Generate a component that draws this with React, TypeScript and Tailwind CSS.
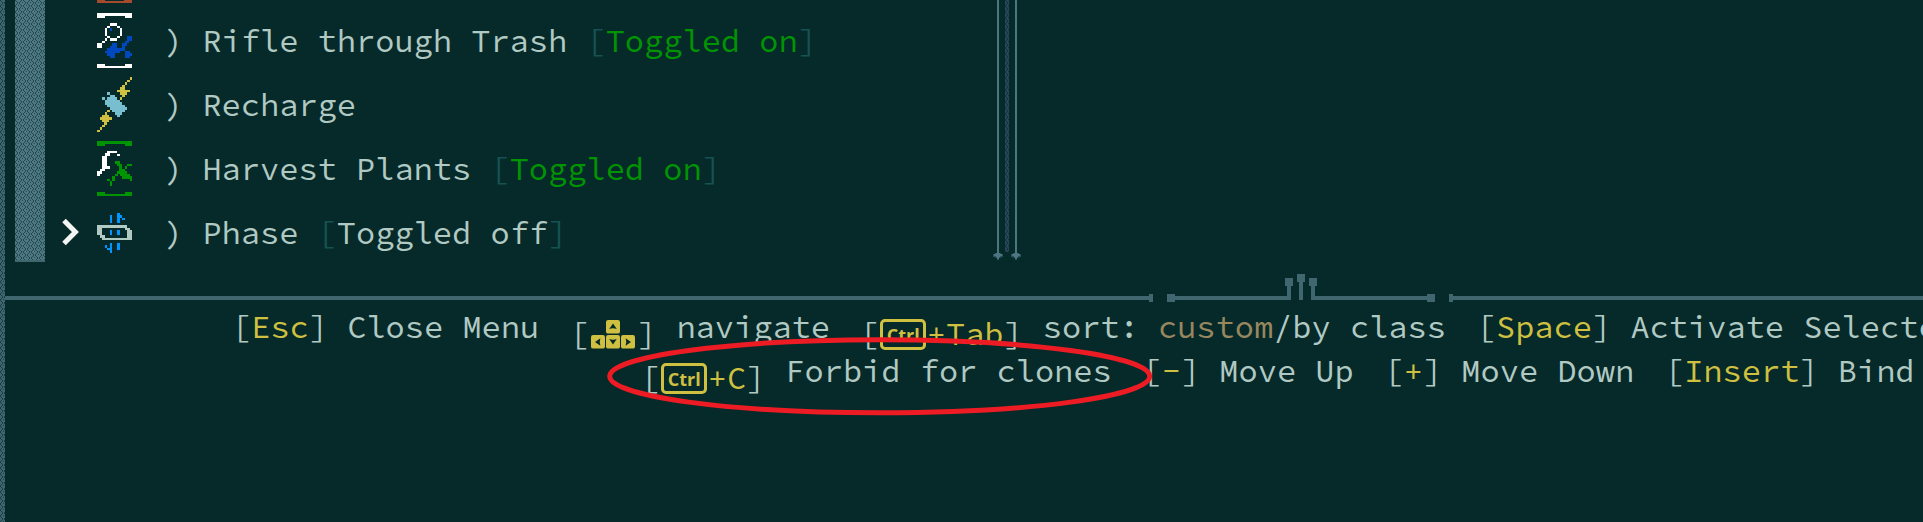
import type { ReactNode } from "react";

type Rect = [number, number, number, number];
type Layer = { fill: string; rects: Rect[] };

// Rects are given as left, top, right, bottom in sprite units.
function Sprite({ viewBox, layers, className }: { viewBox: string; layers: Layer[]; className: string }) {
  return (
    <svg viewBox={viewBox} preserveAspectRatio="none" shapeRendering="crispEdges" className={className}>
      {layers.map((layer, i) => (
        <g key={i} fill={layer.fill}>
          {layer.rects.map(([l, t, r, b], j) => (
            <rect key={j} x={l} y={t} width={r - l} height={b - t} />
          ))}
        </g>
      ))}
    </svg>
  );
}

const WHITE = "#ffffff";
const GREEN = "#009403";
const BLUE = "#0048bd";
const AZURE = "#0096ff";
const YELLOW = "#cfc041";
const CYAN = "#77bfcf";
const GREY = "#b1c9c3";

const rifle: Layer[] = [
  {
    fill: WHITE,
    rects: [
      [291, 36, 396, 45], [291, 45, 315, 51], [375, 45, 396, 51],
      [291, 195, 396, 201], [291, 189, 315, 195], [375, 189, 396, 195],
      [330, 66, 351, 75], [321, 75, 330, 81], [351, 75, 360, 81], [315, 81, 321, 105], [360, 81, 366, 105],
      [321, 105, 330, 111], [351, 105, 360, 111], [330, 111, 351, 120],
      [315, 111, 321, 120], [306, 120, 315, 126], [291, 126, 306, 141],
    ],
  },
  {
    fill: BLUE,
    rects: [
      [330, 81, 336, 90], [381, 105, 396, 120], [375, 120, 387, 126],
      [336, 126, 351, 135], [366, 126, 381, 135], [330, 135, 351, 141], [366, 135, 375, 141],
      [321, 141, 375, 150], [315, 150, 360, 156], [375, 150, 390, 156],
      [321, 156, 345, 165], [375, 156, 396, 165], [330, 165, 345, 171], [375, 165, 390, 171],
    ],
  },
];

const recharge: Layer[] = [
  {
    fill: YELLOW,
    rects: [
      [390, 228, 396, 237], [381, 237, 390, 243], [375, 243, 381, 252], [366, 252, 375, 258],
      [360, 258, 375, 267], [351, 267, 390, 273], [360, 273, 381, 282], [366, 282, 375, 288], [360, 288, 366, 297],
      [321, 327, 330, 333], [315, 333, 321, 342], [306, 342, 327, 348], [300, 348, 336, 357],
      [306, 357, 327, 363], [312, 363, 321, 372], [306, 372, 315, 378], [300, 378, 306, 387], [291, 387, 300, 393],
    ],
  },
  {
    fill: CYAN,
    rects: [
      [321, 273, 330, 282], [306, 288, 315, 297], [330, 282, 345, 288], [321, 288, 351, 297],
      [315, 297, 360, 303], [315, 303, 366, 312], [321, 312, 375, 318], [330, 318, 381, 327],
      [336, 327, 375, 333], [345, 333, 366, 342], [351, 342, 360, 348],
    ],
  },
];

const harvest: Layer[] = [
  {
    fill: GREEN,
    rects: [
      [291, 30, 396, 39], [291, 39, 315, 45], [375, 39, 396, 45],
      [291, 189, 396, 195], [291, 183, 315, 189], [375, 183, 396, 189],
      [345, 90, 360, 99], [351, 99, 366, 105], [381, 99, 396, 105], [357, 105, 366, 114], [375, 105, 381, 114],
      [357, 114, 375, 120], [351, 120, 381, 129], [345, 129, 354, 135], [360, 129, 390, 135],
      [336, 135, 345, 144], [366, 135, 396, 144], [321, 144, 330, 150], [336, 144, 345, 150],
      [390, 144, 396, 150], [330, 150, 336, 165],
    ],
  },
  {
    fill: WHITE,
    rects: [
      [321, 60, 351, 66], [315, 66, 330, 75], [351, 69, 360, 75], [306, 75, 321, 99],
      [306, 99, 321, 105], [315, 105, 330, 114], [306, 105, 315, 120], [300, 114, 306, 129], [291, 120, 300, 135],
    ],
  },
];

const phase: Layer[] = [
  {
    fill: GREY,
    rects: [
      [291, 282, 381, 291], [291, 291, 306, 312], [300, 312, 315, 321], [306, 321, 396, 327],
      [381, 297, 396, 321], [375, 291, 390, 297],
    ],
  },
  {
    fill: AZURE,
    rects: [
      [330, 252, 336, 276], [351, 246, 360, 276], [360, 252, 366, 261], [366, 261, 375, 267],
      [330, 297, 336, 312], [351, 297, 360, 312],
      [330, 336, 336, 366], [315, 342, 321, 351], [321, 351, 330, 357], [351, 336, 360, 357],
    ],
  },
];

function Dither({ id, light, dark, className }: { id: string; light: string; dark: string; className: string }) {
  return (
    <svg className={className} shapeRendering="crispEdges">
      <defs>
        <pattern id={id} width="8" height="6" patternUnits="userSpaceOnUse">
          <rect width="8" height="6" fill={light} />
          <path
            fill={dark}
            d="M0 0h1v1h-1zM1 1h1v1h-1zM2 2h1v1h-1zM4 2h1v1h-1zM5 1h1v1h-1zM6 0h1v1h-1zM4 3h1v1h-1zM5 4h1v1h-1zM6 5h1v1h-1zM0 5h1v1h-1zM1 4h1v1h-1zM2 3h1v1h-1zM7 2h1v1h-1zM3 5h1v1h-1z"
          />
        </pattern>
      </defs>
      <rect width="100%" height="100%" fill={`url(#${id})`} />
    </svg>
  );
}

function Ability({
  icon, top, name, state, on, selected,
}: { icon: Layer[]; top: number; name: string; state?: string; on?: boolean; selected?: boolean }) {
  return (
    <li className="flex h-16 items-center">
      <span className="flex w-[52px] justify-start pl-[17px]">
        {selected && (
          <svg viewBox="0 0 18 28" className="h-7 w-[18px]" fill="none" stroke="#f2f5f4" strokeWidth="5">
            <path d="M2 2.5 L13.4 14 L2 25.5" />
          </svg>
        )}
      </span>
      <Sprite viewBox={`291 ${top} 105 165`} layers={icon} className="h-[55px] w-[35px] shrink-0" />
      <span className="ml-8 pt-[2px] leading-[64px] whitespace-pre">
        {") "}
        {name}
        {state && (
          <>
            <span className="text-[#155352]"> [</span>
            <span className={on ? "text-[#009403]" : ""}>{state}</span>
            <span className="text-[#155352]">]</span>
          </>
        )}
      </span>
    </li>
  );
}

function Rail() {
  return (
    <div className="flex w-[10px] flex-col items-center">
      <div className="h-[252px] w-[2px] bg-[#4b7680]" />
      <svg viewBox="0 0 10 8" className="h-2 w-[10px]" shapeRendering="crispEdges">
        <path fill="#2b525a" d="M0 2h10v3h-10zM2 1h6v5h-6zM4 6h2v2h-2z" />
        <path fill="#4b7680" d="M1 2h8v2h-8zM3 1h4v4h-4zM4 0h2v7h-2z" />
      </svg>
    </div>
  );
}

function Key({ children }: { children: ReactNode }) {
  return (
    <>
      [<span className="text-[#cfc041]">{children}</span>]
    </>
  );
}

function CtrlCap() {
  return (
    <span className="mr-[0.5px] ml-[1px] flex h-[31px] w-[46px] shrink-0 items-center justify-center rounded-[5px] border-3 border-[#cfc041] font-['Open_Sans',sans-serif] text-[18px] leading-none font-bold text-[#cfc041]">
      Ctrl
    </span>
  );
}

function Arrow({ d }: { d: string }) {
  return (
    <svg viewBox="0 0 14 14" className="size-[14px]">
      <rect width="14" height="13.6" rx="2.2" fill="#cfc041" />
      <path d={d} fill="#062a29" />
    </svg>
  );
}

function ArrowKeys() {
  return (
    <span className="flex w-[48px] shrink-0 flex-col items-center gap-px">
      <Arrow d="M7 3.6 L10.8 9 Q7 7.6 3.2 9Z" />
      <span className="flex gap-px">
        <Arrow d="M4 7 L9.4 3.2 Q8 7 9.4 10.8Z" />
        <Arrow d="M7 9.6 L3.2 4 Q7 5.6 10.8 4Z" />
        <Arrow d="M10 7 L4.6 3.2 Q6 7 4.6 10.8Z" />
      </span>
    </span>
  );
}

export default function App() {
  return (
    <div className="relative flex h-[522px] w-full overflow-hidden bg-[#062a29] font-['Source_Code_Pro','Noto_Sans_Mono_CJK_SC','Noto_Sans_Mono','Liberation_Mono',monospace] text-[32px] text-[#b1c9c3]">
      <Dither id="edge" light="#3f666f" dark="#1b3f47" className="h-full w-[5px] shrink-0" />
      <div className="flex min-w-0 flex-1 flex-col">
        <div className="flex h-[274px]">
          <div className="ml-[10px] flex h-[262px] w-[30px] flex-col">
            <Dither id="bar" light="#4d7781" dark="#234851" className="h-[260px] w-full" />
            <div className="h-[2px] bg-[#40676f]" />
          </div>
          <div className="flex w-[948px] flex-col">
            <div className="h-2 pl-[52px]">
              <Sprite
                viewBox="0 0 35 3"
                layers={[{ fill: "#a64a2e", rects: [[0, 0, 8, 3], [27, 0, 35, 3], [0, 1, 35, 3]] }]}
                className="h-[3px] w-[35px]"
              />
            </div>
            <ul>
              <Ability icon={rifle} top={36} name="Rifle through Trash" state="Toggled on" on />
              <Ability icon={recharge} top={228} name="Recharge" />
              <Ability icon={harvest} top={30} name="Harvest Plants" state="Toggled on" on />
              <Ability icon={phase} top={222} name="Phase" state="Toggled off" selected />
            </ul>
          </div>
          <div className="flex">
            <Rail />
            <Dither id="rail" light="#24485a" dark="#14323f" className="mx-[2px] h-[252px] w-[4px]" />
            <Rail />
          </div>
        </div>
        <svg viewBox="5 274 1918 28" className="h-7 w-[1918px] shrink-0" shapeRendering="crispEdges">
          <path
            fill="#40676f"
            d="M5 296H1149V294H1153V302H1149V300H5ZM1167 294H1175V296H1287V286H1285V278H1293V286H1291V300H1175V302H1167ZM1297 274H1305V282H1303V300H1299V282H1297ZM1309 278H1317V286H1315V296H1427V294H1435V302H1427V300H1311V286H1309ZM1449 294H1453V296H1923V300H1453V302H1449Z"
          />
        </svg>
        <div className="mt-1 flex flex-col gap-px leading-[43px] whitespace-pre">
          <div className="flex h-[43px] items-start pl-[227px]">
            <span><Key>Esc</Key> Close Menu</span>
            <span className="mt-[7px] ml-[30.8px] flex h-[43px] items-center">[<ArrowKeys />]</span>
            <span className="ml-5">navigate</span>
            <span className="mt-[7px] ml-[30px] flex h-[43px] items-center">
              [<CtrlCap /><span className="text-[#cfc041]">+Tab</span>]
            </span>
            <span className="ml-5">sort: <span className="text-[#98875f]">custom</span>/by class</span>
            <span className="ml-[30.8px]"><Key>Space</Key> Activate Selected</span>
          </div>
          <div className="flex h-[43px] items-start pl-[636px]">
            <span className="mt-[7px] flex h-[43px] items-center">
              [<CtrlCap /><span className="text-[#cfc041]">+C</span>]
            </span>
            <span className="ml-5">Forbid for clones</span>
            <span className="ml-[30.8px]"><Key>-</Key> Move Up</span>
            <span className="ml-[30.8px]"><Key>+</Key> Move Down</span>
            <span className="ml-[30.8px]"><Key>Insert</Key> Bind</span>
          </div>
        </div>
      </div>
      <svg viewBox="0 0 548 80" className="absolute top-[336px] left-[606px] h-[80px] w-[548px]" fill="none">
        <ellipse cx="273.7" cy="40.3" rx="270" ry="36.5" stroke="#ed1c24" strokeWidth="5" />
      </svg>
    </div>
  );
}
